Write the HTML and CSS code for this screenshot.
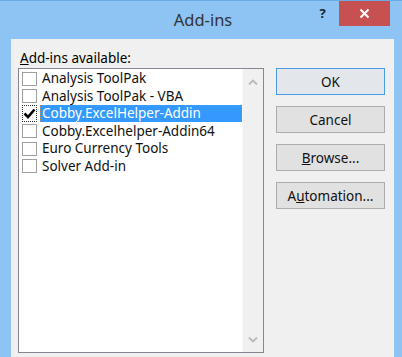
FILE: index.html
```html
<!DOCTYPE html>
<html lang="en">
    <head>
        <meta charset="utf-8">
        <title>Add-ins</title>
        <link rel="stylesheet" href="styles.css">
    </head>
    <body>
        <div class="window">
            <div class="titlebar">
                <div class="title">Add-ins</div>
                <div class="help">?</div>
                <div class="close">
                    <svg width="11" height="11" viewBox="0 0 11 11"><path d="M1.5 1.5 L9.5 9.5 M9.5 1.5 L1.5 9.5" stroke="#fff" stroke-width="2"/></svg>
                </div>
            </div>
            <div class="client">
                <div class="left">
                    <div class="label"><u>A</u>dd-ins available:</div>
                    <div class="listbox">
                        <div class="items">
                            <div class="row"><span class="box"></span><span class="text">Analysis ToolPak</span></div>
                            <div class="row"><span class="box"></span><span class="text">Analysis ToolPak - VBA</span></div>
                            <div class="row selected">
                                <span class="box checked">
                                    <svg width="13" height="13" viewBox="0 0 13 13"><path d="M1.5 6.5 L5 10 L11.5 2.5" fill="none" stroke="#000" stroke-width="2.6"/></svg>
                                </span>
                                <span class="text">Cobby.ExcelHelper-Addin</span>
                            </div>
                            <div class="row"><span class="box"></span><span class="text">Cobby.Excelhelper-Addin64</span></div>
                            <div class="row"><span class="box"></span><span class="text">Euro Currency Tools</span></div>
                            <div class="row"><span class="box"></span><span class="text">Solver Add-in</span></div>
                        </div>
                        <div class="scrollbar">
                            <svg width="10" height="6" viewBox="0 0 10 6"><path d="M1 5.5 L5 1.5 L9 5.5" fill="none" stroke="#b9b9b9" stroke-width="1.8"/></svg>
                            <svg width="10" height="6" viewBox="0 0 10 6"><path d="M1 0.5 L5 4.5 L9 0.5" fill="none" stroke="#b9b9b9" stroke-width="1.8"/></svg>
                        </div>
                    </div>
                </div>
                <div class="buttons">
                    <button class="default">OK</button>
                    <button>Cancel</button>
                    <button><u>B</u>rowse...</button>
                    <button>A<u>u</u>tomation...</button>
                </div>
            </div>
        </div>
    </body>
</html>
```

FILE: styles.css
```css
*{
    box-sizing: border-box;
}
body{
    margin: 0;
    padding: 0;
    font-family: "Noto Sans", "Open Sans", sans-serif;
}
.window{
    width: 402px;
    height: 357px;
    background-color: #8dc4f4;
    border-top: 1px solid #6aa8e6;
    display: flex;
    flex-direction: column;
}
.titlebar{
    height: 38px;
    display: flex;
    align-items: flex-start;
    padding-right: 12px;
}
.title{
    flex: 1;
    padding-left: 94px;
    text-align: center;
    font-size: 16.5px;
    color: #333;
    line-height: 38px;
}
.help{
    width: 27px;
    height: 25px;
    line-height: 25px;
    text-align: center;
    font-weight: bold;
    font-size: 13px;
    color: #222;
    padding-right: 6px;
}
.close{
    width: 51px;
    height: 25px;
    background-color: #c75050;
    display: flex;
    justify-content: center;
    align-items: center;
}
.client{
    flex: 1;
    margin: 0 8px 0 11px;
    background-color: #f0f0f0;
    display: flex;
    gap: 12px;
    padding: 11px 9px 0 7px;
    overflow: hidden;
}
.left{
    display: flex;
    flex-direction: column;
}
.label{
    font-size: 13.5px;
    color: #000;
    height: 18px;
    line-height: 16px;
    padding-left: 2px;
}
.listbox{
    width: 246px;
    height: 285px;
    border: 1px solid #828790;
    background-color: #fff;
    display: flex;
}
.items{
    flex: 1;
    padding: 1px 0 0 3px;
}
.row{
    height: 17.5px;
    display: flex;
    align-items: center;
    font-size: 13.5px;
    color: #111;
}
.box{
    width: 15px;
    height: 14px;
    border: 1px solid #a0a0a0;
    background-color: #fff;
    margin-right: 3px;
    display: flex;
    align-items: center;
    justify-content: center;
}
.box.checked{
    border: 1px dotted #333;
    height: 17px;
}
.text{
    flex: 1;
    height: 17px;
    line-height: 17px;
    padding-left: 2px;
}
.selected .text{
    background-color: #3399ff;
    color: #fff;
    outline: 1px dotted #c08040;
    outline-offset: -1px;
}
.scrollbar{
    width: 21px;
    background-color: #f0f0f0;
    border-left: 1px solid #f7f7f7;
    display: flex;
    flex-direction: column;
    justify-content: space-between;
    align-items: center;
    padding: 10px 0 9px;
}
.buttons{
    display: flex;
    flex-direction: column;
    gap: 11px;
    padding-top: 18px;
}
button{
    width: 109px;
    height: 27px;
    font-family: "Noto Sans", "Open Sans", sans-serif;
    font-size: 13.5px;
    color: #111;
    background-color: #e1e1e1;
    border: 1px solid #adadad;
    padding: 0;
}
button.default{
    border-color: #4a9be6;
    background-color: #e3e6ea;
}
```
